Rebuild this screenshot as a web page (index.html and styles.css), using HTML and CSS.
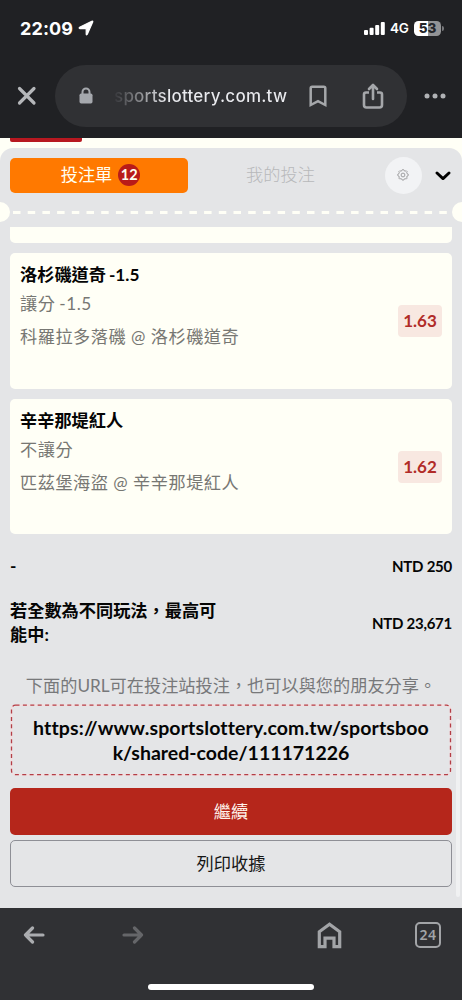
FILE: index.html
```html
<!DOCTYPE html>
<html lang="zh-Hant">
<head>
<meta charset="utf-8">
<title>投注單</title>
<link rel="stylesheet" href="styles.css">
</head>
<body>
<header class="top">
  <div class="status">
    <span class="time">22:09</span>
    <svg class="location" width="16" height="16" viewBox="0 0 16 16"><path d="M1.6 7.3 13.8 1.2q1.3-.4.9.9L9.3 14.3q-.7 1.1-1.1-.1V8.600H2q-1.500-.5-.4-1.300z" fill="#fff" stroke="#fff" stroke-width="1.200" stroke-linejoin="round"/></svg>
    <svg class="signal" width="21" height="13" viewBox="0 0 21 13" fill="#fff"><rect x="0" y="8" width="4" height="5" rx="1"/><rect x="5.600" y="5.800" width="4" height="7.200" rx="1"/><rect x="11.200" y="3" width="4" height="10" rx="1"/><rect x="16.800" y="0" width="4" height="13" rx="1"/></svg>
    <span class="network">4G</span>
    <span class="battery">53</span>
    <span class="battery-tip"></span>
  </div>
  <div class="address">
    <svg class="close" width="20" height="20" viewBox="0 0 20 20"><path d="M2.500 2.500 17 17M17 2.500 2.500 17" stroke="#b5b7ba" stroke-width="3.200" stroke-linecap="round"/></svg>
    <div class="pill">
      <svg class="lock" width="14" height="18" viewBox="0 0 14 18"><path d="M3.500 8V5a3.500 3.500 0 0 1 7 0v3" fill="none" stroke="#a5a8ad" stroke-width="2"/><rect x=".5" y="6.500" width="13" height="10" rx="1.700" fill="#a5a8ad"/></svg>
      <span class="url">sportslottery.com.tw</span>
      <svg class="bookmark" width="18" height="23" viewBox="0 0 18 23"><path d="M1.700 20V3.200q0-1.500 1.500-1.500h11.600q1.500 0 1.500 1.500V20L9 16.200z" fill="none" stroke="#a5a7aa" stroke-width="2.500"/></svg>
      <svg class="share" width="22" height="27" viewBox="0 0 22 27" fill="none" stroke="#a5a7aa" stroke-width="2.600" stroke-linejoin="round"><path d="M7 9.500H4Q2 9.500 2 11.500V22q0 2.500 2.500 2.500h13Q20 24.500 20 22V11.500q0-2-2-2h-3" /><path d="M11 16V2.500M7 6l4-4 4 4" stroke-linecap="round"/></svg>
    </div>
    <svg class="more" width="22" height="6" viewBox="0 0 22 6" fill="#b0b2b5"><circle cx="3" cy="3" r="2.500"/><circle cx="11" cy="3" r="2.500"/><circle cx="19" cy="3" r="2.500"/></svg>
  </div>
</header>
<main class="page">
  <div class="page-tab"></div>
  <section class="sheet">
    <nav class="tabs">
      <div class="tab active"><span class="tab-label">投注單</span><span class="count">12</span></div>
      <div class="tab"><span class="tab-label">我的投注</span></div>
      <div class="settings"><svg width="12" height="12" viewBox="0 0 12 12" fill="none" stroke="#8a8a8c" stroke-width=".8"><path d="M4.900 1.700 5.300.7h1.400l.4 1 1.100.5 1-.5 1 1-.5 1 .5 1.100 1 .4v1.400l-1 .4-.5 1.100.5 1-1 1-1-.5-1.100.5-.4 1H5.300l-.4-1-1.100-.5-1 .5-1-1 .5-1-.5-1.100-1-.4V5.200l1-.4.5-1.100-.5-1 1-1 1 .5z"/><circle cx="6" cy="6" r="1.900"/></svg></div>
      <svg class="chevron" width="16" height="10" viewBox="0 0 16 10"><path d="M2 2 8 7.600 14 2" fill="none" stroke="#000" stroke-width="2.900" stroke-linecap="round" stroke-linejoin="round"/></svg>
    </nav>
    <div class="perforation">
      <span class="notch left"></span>
      <svg class="dashes" width="437" height="4" viewBox="0 0 437 4"><path d="M0 2.500h437" stroke="#fffff6" stroke-width="3" stroke-dasharray="7.500 7.200"/></svg>
      <span class="notch right"></span>
    </div>
    <div class="card partial"></div>
    <article class="card">
      <div class="bet"><h2>洛杉磯道奇 -1.5</h2><p class="market">讓分 -1.5</p><p class="match">科羅拉多落磯 @ 洛杉磯道奇</p></div>
      <span class="odds">1.63</span>
    </article>
    <article class="card">
      <div class="bet"><h2>辛辛那堤紅人</h2><p class="market">不讓分</p><p class="match">匹茲堡海盜 @ 辛辛那堤紅人</p></div>
      <span class="odds">1.62</span>
    </article>
    <div class="total"><span>-</span><span class="amount">NTD 250</span></div>
    <div class="total max"><span class="label">若全數為不同玩法，最高可<br>能中:</span><span class="amount">NTD 23,671</span></div>
    <p class="note">下面的URL可在投注站投注，也可以與您的朋友分享。</p>
    <div class="share-url">
      <svg class="outline" width="442" height="72"><rect x="1.500" y="1.200" width="439" height="69.500" rx="4" fill="none" stroke="#f6dcdd" stroke-width="1.500"/><rect x="1.500" y="1.200" width="439" height="69.500" rx="4" fill="none" stroke="#b33e46" stroke-width="1.300" stroke-dasharray="4 3.400"/></svg>
      <span class="link"><span class="link-start">https://www.sportslottery.com.tw/sportsboo</span><br>k/shared-code/111171226</span>
    </div>
    <div class="button primary">繼續</div>
    <div class="button secondary">列印收據</div>
    <span class="scrollbar"></span>
  </section>
</main>
<footer class="bottom">
  <div class="tools">
    <svg class="back" width="22" height="18" viewBox="0 0 22 18" fill="none" stroke="#aaacaf" stroke-width="3.200" stroke-linecap="round" stroke-linejoin="round"><path d="M20 9H2.500M9.500 2l-7 7 7 7"/></svg>
    <svg class="forward" width="22" height="18" viewBox="0 0 22 18" fill="none" stroke="#656669" stroke-width="3.200" stroke-linecap="round" stroke-linejoin="round"><path d="M2 9h17.500M12.500 2l7 7-7 7"/></svg>
    <svg class="home" width="25" height="27" viewBox="0 0 25 27"><path d="M2.300 24.700V9.800l10.200-7.600 10.200 7.600v14.900h-5.700v-8.500h-9v8.500z" fill="none" stroke="#a2a4a7" stroke-width="3.200"/></svg>
    <span class="tab-count">24</span>
  </div>
  <div class="home-indicator"></div>
</footer>
</body>
</html>
```

FILE: styles.css
```css
* { box-sizing: border-box; }
body { margin: 0; width: 462px; height: 1000px; overflow: hidden; display: flex; flex-direction: column; background: #e4e5e7; font-family: Lato, "Noto Sans CJK TC", sans-serif; font-variant-ligatures: none; }
h2, p { margin: 0; }
svg { display: block; flex-shrink: 0; }

.top { height: 138px; flex-shrink: 0; background: #202124; color: #fff; font-family: Inter, sans-serif; }
.status { height: 65px; display: flex; align-items: center; padding: 0 18px 9px 20px; }
.time { width: 53px; font-size: 18px; font-weight: 700; white-space: nowrap; letter-spacing: .1px; }
.location { margin-left: 5px; }
.signal { margin-left: auto; }
.network { margin-left: 5px; width: 19px; font-size: 13.500px; font-weight: 600; white-space: nowrap; letter-spacing: -.3px; }
.battery { margin-left: 5px; width: 27px; height: 15px; border-radius: 4.500px; background: linear-gradient(90deg, #fff 53%, #929395 53%); color: #242529; font-size: 13.500px; line-height: 15px; font-weight: 800; text-align: center; }
.battery-tip { margin-left: 1px; width: 2px; height: 5px; border-radius: 0 2px 2px 0; background: #77787b; }
.address { height: 62px; display: flex; align-items: center; padding-left: 17px; }
.pill { margin-left: 18px; width: 352px; height: 62px; border-radius: 31px; background: #303134; display: flex; align-items: center; }
.lock { margin-left: 24px; }
.url { margin-left: 21px; width: 175px; font-size: 17px; font-weight: 500; letter-spacing: .23px; white-space: nowrap; color: transparent; background: linear-gradient(90deg, #35363a, #8c8d90 15%, #e9eaee 30%); background-clip: text; -webkit-background-clip: text; }
.bookmark { margin-left: 20px; }
.share { margin-left: 35px; }
.more { margin-left: 17px; }

.page { height: 769px; flex-shrink: 0; background: #fffff6; }
.page-tab { width: 72px; height: 4px; margin: 0 0 5.500px 10px; border-radius: 0 0 2px 2px; background: #b71820; }
.sheet { position: relative; height: 760px; padding: 10px 10px 0; border-radius: 13px 13px 0 0; background: #e4e5e7; }
.tabs { height: 35px; display: flex; align-items: center; }
.tab { width: 185px; height: 35px; display: flex; align-items: center; justify-content: center; font-size: 17.200px; color: #b7b8ba; font-weight: 300; }
.tab-label { margin-bottom: 3px; }
.tab.active { width: 178px; border-radius: 5px; background: #ff7900; color: #fffff0; padding-left: 3px; font-weight: 400; }
.count { margin-left: 6px; width: 22px; height: 22px; border-radius: 50%; background: #b91b19; font-size: 14.500px; line-height: 22px; text-align: center; font-weight: 700; }
.settings { margin-left: 12px; width: 37px; height: 37px; border-radius: 50%; background: #f2f3f5; display: flex; align-items: center; justify-content: center; padding-right: 2px; }
.chevron { margin: 2px 0 0 13px; }
.perforation { height: 20px; margin: 9.500px -10px 0; display: flex; align-items: center; }
.notch { width: 10px; height: 20px; background: #fffff6; }
.notch.left { border-radius: 0 10px 10px 0; margin-right: 3px; }
.notch.right { border-radius: 10px 0 0 10px; margin-left: auto; }
.card { height: 135.500px; margin-bottom: 10px; border-radius: 5px; background: #fffff6; padding: 6px 10px 0; display: flex; justify-content: space-between; }
.card.partial { height: 16.500px; margin-top: 4.500px; border-radius: 0 0 5px 5px; padding: 0; }
.bet h2 { font-size: 17.200px; line-height: 31px; font-weight: 700; color: #050505; word-spacing: -1.200px; }
.market, .match { color: #777773; font-size: 17.200px; letter-spacing: .5px; }
.market { line-height: 27px; word-spacing: -1px; }
.match { line-height: 39px; }
.odds { margin-top: 46px; width: 44px; height: 32px; border-radius: 4px; background: #f8e8e1; color: #b12c28; font-size: 17px; line-height: 32px; font-weight: 700; text-align: center; }
.total { height: 25px; margin-top: 19px; display: flex; align-items: center; justify-content: space-between; font-size: 17.200px; font-weight: 700; color: #050505; }
.total.max { height: 50px; margin-top: 20px; line-height: 24.500px; }
.amount { font-size: 15px; letter-spacing: -.25px; }
.note { margin-top: 23px; height: 30px; line-height: 30px; font-size: 17.200px; color: #77787a; text-align: center; white-space: nowrap; }
.share-url { position: relative; margin-top: 3px; height: 72px; text-align: center; font-size: 19.500px; line-height: 24.500px; font-weight: 700; color: #050505; padding-top: 12px; }
.link-start { letter-spacing: .13px; }
.outline { position: absolute; left: 0; top: 0; }
.button { height: 47px; display: flex; align-items: center; justify-content: center; font-size: 17.200px; border-radius: 5px; padding-bottom: 2px; }
.primary { margin-top: 12px; background: #b5261b; color: #fff3eb; }
.secondary { margin-top: 5px; border: 1.300px solid #8e8f96; color: #151515; }
.scrollbar { position: absolute; right: 2px; top: 571px; width: 4px; height: 178px; border-radius: 2px; background: #f0f1f2; }

.bottom { flex: 1; background: #303134; border-top: 1px solid #77787b; }
.tools { height: 54px; display: flex; align-items: center; padding-left: 23px; }
.forward { margin-left: 77px; }
.home { margin-left: 173px; }
.tab-count { margin-left: 73px; width: 26px; height: 26px; border: 2px solid #a2a4a7; border-radius: 5px; color: #a2a4a7; font: 600 14px/22px "Noto Sans", sans-serif; text-align: center; letter-spacing: .5px; }
.home-indicator { width: 166px; height: 6px; margin: 22px auto 0; border-radius: 3px; background: #fff; }
```
